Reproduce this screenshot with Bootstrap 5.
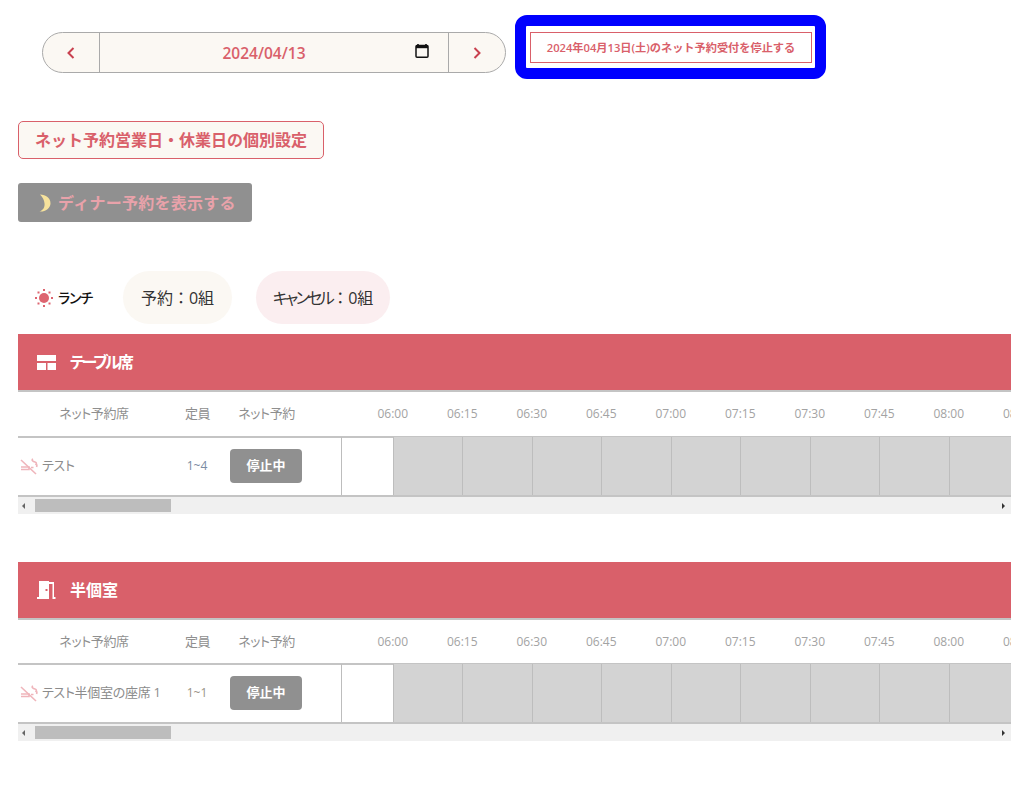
<!DOCTYPE html>
<html lang="ja">
<head>
<meta charset="utf-8">
<title>予約</title>
<link href="https://cdn.jsdelivr.net/npm/bootstrap@5.3.0/dist/css/bootstrap.min.css" rel="stylesheet">
<style>
html,body{height:100%;overflow:hidden}
body{font-family:"Open Sans","Noto Sans CJK JP",sans-serif;font-feature-settings:"palt";color:#222;background:#fff}
.page-wrap{padding:15px 11px 0 18px}
.date-bar{width:464px;height:41px;margin:17px 0 0 24px;background:#fbf8f3;border:1px solid #aaa;border-radius:21px;overflow:hidden}
.date-nav{width:56px;flex:none;height:100%;padding:0;border:0;background:transparent}
.date-mid{border-left:1px solid #aaa;border-right:1px solid #aaa;color:#d9606a;font-size:15.5px;font-weight:600;height:100%;position:relative;padding:2px 20px 0 0}
.cal-icon{position:absolute;right:19px;top:10px}
.stop-frame{margin-left:9px;width:311px;height:64px;border:11px solid #0000ff;border-radius:12px;padding:6px 3px 5px 4px;background:#fff}
.stop-btn{width:100%;height:31px;padding:1px 0 0;border:1px solid #d9606a;border-radius:0;background:#fff;color:#d9606a;font-size:11.2px;font-weight:600}
.set-btn{margin-top:42px;width:306px;height:38px;padding:0;border:1px solid #d9606a;border-radius:5px;background:#fbf8f3;color:#d9606a;font-size:16px;font-weight:700}
.dinner-btn{margin-top:24px;width:234px;height:39px;padding:0 0 0 20px;border:0;border-radius:3px;background:#909090;color:#e8a2aa;font-size:16px;font-weight:700;letter-spacing:.25px;gap:6px}
.sum-row{margin-top:49px;height:53px;padding-left:17px}
.lunch-label{font-size:14px;font-weight:500;letter-spacing:-1px;color:#111;gap:5px;width:88px}
.sum-pill{height:53px;border-radius:27px;font-size:16px;color:#333}
.pill-a{background:#fbf8f3;margin-right:24px;width:109px}
.pill-b{background:#fbeef0;width:134px}
.full-colon{font-feature-settings:normal}
.kana-tight{letter-spacing:-3px}
.kana-soft{letter-spacing:-2.6px}
.seat-head{height:58px;background:#d9606a;border-bottom:2px solid #c4c4c4;color:#fff;font-size:16px;font-weight:700;padding-left:19px;gap:14px}
.sec-one{margin-top:10px}
.sec-two{margin-top:48px}
.sec-two .col-head{height:45px}
.grid-clip{overflow:hidden}
.col-head{height:46px;color:#8f8f8f;font-size:13px;letter-spacing:-.4px;border-bottom:2px solid #c4c4c4;margin-bottom:-1px}
.c-name{width:152px;flex:none;text-align:center}
.c-cap{width:55px;flex:none;text-align:center}
.c-net{width:83px;flex:none;text-align:center}
.t-wrap{padding-left:50px;letter-spacing:0}
.t-lab{width:69.5px;flex:none;text-align:center;font-size:12px;color:#a3a3a3;white-space:nowrap}
.seat-row{height:60px;border-bottom:2px solid #c4c4c4;color:#8c8c8c;font-size:13px}
.name-cell{width:147px;flex:none;gap:4px;padding-left:2px;white-space:nowrap;letter-spacing:-.3px}
.cap-cell{width:64px;flex:none;text-align:center;font-size:12px}
.cap-blue{color:#7a8ca3}
.cap-warm{color:#9a9488}
.net-cell{width:112px;flex:none;padding-left:1px}
.paused{width:72px;height:34px;background:#909090;color:#fff;font-size:13px;font-weight:700;border-radius:4px;padding:0;border:0}
.blank-cell{width:52px;flex:none;height:100%;border-left:1px solid #bdbdbd}
.gray-cell{width:69.45px;flex:none;height:100%;background:#d3d3d3;border-left:1px solid #bdbdbd}
.fake-bar{height:17px;background:#f0f0f0;padding:2px 0}
.bar-thumb{width:136px;height:13px;background:#bdbdbd;margin-left:5px}
.arrow-l,.arrow-r{width:12px;flex:none;text-align:center}
.bar-end{width:2px}
</style>
</head>
<body>
<div class="page-wrap">
  <div class="d-flex align-items-start">
    <div class="date-bar d-flex align-items-center">
      <button class="date-nav d-flex align-items-center justify-content-center" aria-label="前日">
        <svg width="10" height="14" viewBox="0 0 10 14"><path d="M7.5 2 2.5 7l5 5" fill="none" stroke="#c8414f" stroke-width="2"/></svg>
      </button>
      <div class="date-mid flex-grow-1 d-flex align-items-center justify-content-center">2024/04/13
        <svg class="cal-icon" width="14" height="16" viewBox="0 0 14 16"><path d="M3 1v2M11 1v2" stroke="#111" stroke-width="1.6"/><rect x="1" y="2.600" width="12" height="11.600" rx="1" fill="none" stroke="#111" stroke-width="1.500"/><rect x="1" y="2.600" width="12" height="2.600" fill="#111"/></svg>
      </div>
      <button class="date-nav d-flex align-items-center justify-content-center" aria-label="翌日">
        <svg width="10" height="14" viewBox="0 0 10 14"><path d="M2.5 2l5 5-5 5" fill="none" stroke="#c8414f" stroke-width="2"/></svg>
      </button>
    </div>
    <div class="stop-frame"><button class="stop-btn">2024年04月13日(土)のネット予約受付を停止する</button></div>
  </div>

  <div><button class="set-btn">ネット予約営業日・休業日の個別設定</button></div>
  <div><button class="dinner-btn d-flex align-items-center">
    <svg width="14" height="18" viewBox="0 0 14 18"><path d="M2 .5c6 0 10.500 3.500 10.500 8.700S7 18 1.500 17.500c4-1.500 5.500-4.800 5-8.300C6.200 6 4.500 2.800 2 .5z" fill="#f6e29c"/></svg>
    ディナー予約を表示する</button></div>

  <div class="sum-row d-flex align-items-center">
    <div class="lunch-label d-flex align-items-center">
      <svg width="18" height="18" viewBox="0 0 18 18"><circle cx="9" cy="9" r="5" fill="#dd6570"/><g fill="#dd6570"><rect x="8" y="0" width="2" height="2"/><rect x="8" y="16" width="2" height="2"/><rect x="0" y="8" width="2" height="2"/><rect x="16" y="8" width="2" height="2"/><rect x="2.500" y="2.500" width="2" height="2"/><rect x="13.500" y="2.500" width="2" height="2"/><rect x="2.500" y="13.500" width="2" height="2"/><rect x="13.500" y="13.500" width="2" height="2"/></g></svg>
      <span>ランチ</span></div>
    <div class="sum-pill pill-a d-flex align-items-center justify-content-center"><span>予約<span class="full-colon">：</span>0組</span></div>
    <div class="sum-pill pill-b d-flex align-items-center justify-content-center"><span><span class="kana-soft">キャンセル</span><span class="full-colon">：</span>0組</span></div>
  </div>

  <section class="sec-one">
    <div class="seat-head d-flex align-items-center">
      <svg width="19" height="15" viewBox="0 0 19 15"><path fill="#fff" d="M0 0h19v6H0zM0 8h9v7H0zM10.500 8H19v7h-8.500z"/></svg>
      <span><span class="kana-tight">テーブル</span>席</span></div>
    <div class="grid-clip">
      <div class="col-head d-flex align-items-center">
        <div class="c-name">ネット予約席</div><div class="c-cap">定員</div><div class="c-net">ネット予約</div>
        <div class="t-wrap d-flex">
          <div class="t-lab">06:00</div><div class="t-lab">06:15</div><div class="t-lab">06:30</div><div class="t-lab">06:45</div><div class="t-lab">07:00</div><div class="t-lab">07:15</div><div class="t-lab">07:30</div><div class="t-lab">07:45</div><div class="t-lab">08:00</div><div class="t-lab">08:15</div>
        </div>
      </div>
      <div class="seat-row d-flex align-items-center">
        <div class="name-cell d-flex align-items-center">
          <svg width="18" height="17" viewBox="0 0 18 17"><g fill="none" stroke="#efb5bb" stroke-width="1.600"><path d="M1 2l15 14"/><path d="M1 9h8v2.500H1M11 9.500h2.500"/><path d="M13 1c-2 1 0 2.500 2 3s1.500 2 .5 3M16 5.500c1 1 1 2.500 .5 3.500"/></g></svg>
          <span>テスト</span></div>
        <div class="cap-cell cap-blue">1~4</div>
        <div class="net-cell"><button class="paused">停止中</button></div>
        <div class="blank-cell"></div>
        <div class="gray-cell"></div><div class="gray-cell"></div><div class="gray-cell"></div><div class="gray-cell"></div><div class="gray-cell"></div><div class="gray-cell"></div><div class="gray-cell"></div><div class="gray-cell"></div><div class="gray-cell"></div><div class="gray-cell"></div>
      </div>
    </div>
    <div class="fake-bar d-flex align-items-center">
      <svg class="arrow-l" width="12" height="8" viewBox="0 0 12 8"><path d="M7 1v6L4 4z" fill="#666"/></svg>
      <div class="bar-thumb"></div>
      <div class="flex-grow-1"></div>
      <svg class="arrow-r" width="12" height="8" viewBox="0 0 12 8"><path d="M5 1v6l3-3z" fill="#333"/></svg>
      <span class="d-block bar-end"></span>
    </div>
  </section>

  <section class="sec-two">
    <div class="seat-head d-flex align-items-center">
      <svg width="19" height="18" viewBox="0 0 19 18"><path fill="#fff" fill-rule="evenodd" d="M2 0h10v16H2zM8.500 8h2v2h-2z"/><path fill="#fff" d="M0 16h12v2H0zM12 1h5v15h1.500v2H15.500V3H12z"/></svg>
      <span>半個室</span></div>
    <div class="grid-clip">
      <div class="col-head d-flex align-items-center">
        <div class="c-name">ネット予約席</div><div class="c-cap">定員</div><div class="c-net">ネット予約</div>
        <div class="t-wrap d-flex">
          <div class="t-lab">06:00</div><div class="t-lab">06:15</div><div class="t-lab">06:30</div><div class="t-lab">06:45</div><div class="t-lab">07:00</div><div class="t-lab">07:15</div><div class="t-lab">07:30</div><div class="t-lab">07:45</div><div class="t-lab">08:00</div><div class="t-lab">08:15</div>
        </div>
      </div>
      <div class="seat-row d-flex align-items-center">
        <div class="name-cell d-flex align-items-center">
          <svg width="18" height="17" viewBox="0 0 18 17"><g fill="none" stroke="#efb5bb" stroke-width="1.600"><path d="M1 2l15 14"/><path d="M1 9h8v2.500H1M11 9.500h2.500"/><path d="M13 1c-2 1 0 2.500 2 3s1.500 2 .5 3M16 5.500c1 1 1 2.500 .5 3.500"/></g></svg>
          <span>テスト半個室の座席 1</span></div>
        <div class="cap-cell cap-warm">1~1</div>
        <div class="net-cell"><button class="paused">停止中</button></div>
        <div class="blank-cell"></div>
        <div class="gray-cell"></div><div class="gray-cell"></div><div class="gray-cell"></div><div class="gray-cell"></div><div class="gray-cell"></div><div class="gray-cell"></div><div class="gray-cell"></div><div class="gray-cell"></div><div class="gray-cell"></div><div class="gray-cell"></div>
      </div>
    </div>
    <div class="fake-bar d-flex align-items-center">
      <svg class="arrow-l" width="12" height="8" viewBox="0 0 12 8"><path d="M7 1v6L4 4z" fill="#666"/></svg>
      <div class="bar-thumb"></div>
      <div class="flex-grow-1"></div>
      <svg class="arrow-r" width="12" height="8" viewBox="0 0 12 8"><path d="M5 1v6l3-3z" fill="#333"/></svg>
      <span class="d-block bar-end"></span>
    </div>
  </section>
</div>
<script src="https://cdn.jsdelivr.net/npm/bootstrap@5.3.0/dist/js/bootstrap.bundle.min.js"></script>
</body>
</html>
